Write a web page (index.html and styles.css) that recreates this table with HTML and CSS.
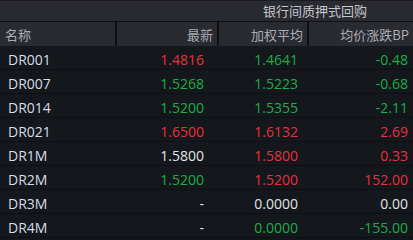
FILE: index.html
```html
<!DOCTYPE html>
<html lang="zh">
<head>
<meta charset="utf-8">
<link rel="stylesheet" href="styles.css">
</head>
<body>
<div class="board">
  <div class="title-bar">
    <div class="title">银行间质押式回购</div>
  </div>
  <div class="grid">
    <div class="hcell name">名称</div>
    <div class="hcell sep">最新</div>
    <div class="hcell sep">加权平均</div>
    <div class="hcell sep">均价涨跌BP</div>

    <div class="cell name">DR001</div>
    <div class="cell c2 up">1.4816</div>
    <div class="cell c3 down">1.4641</div>
    <div class="cell c4 down">-0.48</div>

    <div class="cell name">DR007</div>
    <div class="cell c2 down">1.5268</div>
    <div class="cell c3 down">1.5223</div>
    <div class="cell c4 down">-0.68</div>

    <div class="cell name">DR014</div>
    <div class="cell c2 down">1.5200</div>
    <div class="cell c3 down">1.5355</div>
    <div class="cell c4 down">-2.11</div>

    <div class="cell name">DR021</div>
    <div class="cell c2 up">1.6500</div>
    <div class="cell c3 up">1.6132</div>
    <div class="cell c4 up">2.69</div>

    <div class="cell name">DR1M</div>
    <div class="cell c2 flat">1.5800</div>
    <div class="cell c3 up">1.5800</div>
    <div class="cell c4 up">0.33</div>

    <div class="cell name">DR2M</div>
    <div class="cell c2 down">1.5200</div>
    <div class="cell c3 up">1.5200</div>
    <div class="cell c4 up">152.00</div>

    <div class="cell name">DR3M</div>
    <div class="cell c2 flat">-</div>
    <div class="cell c3 flat">0.0000</div>
    <div class="cell c4 flat">0.00</div>

    <div class="cell name">DR4M</div>
    <div class="cell c2 flat">-</div>
    <div class="cell c3 down">0.0000</div>
    <div class="cell c4 down">-155.00</div>
  </div>
</div>
</body>
</html>
```
FILE: styles.css
```css
html, body {
  margin: 0;
  padding: 0;
  background: #14171c;
}
body {
  font-family: "Open Sans", "Noto Sans CJK SC", sans-serif;
  width: 413px;
  height: 240px;
  overflow: hidden;
}
.board {
  display: flex;
  flex-direction: column;
}
.title-bar {
  height: 21px;
  background: #2a2a31;
  border-top: 1px solid #1a1a1f;
  box-sizing: border-box;
  display: grid;
  grid-template-columns: 217px 1fr;
}
.title {
  grid-column: 2;
  text-align: center;
  font-family: "Noto Sans CJK SC", sans-serif;
  font-size: 13px;
  line-height: 20px;
  color: #c4c6cc;
}
.grid {
  display: grid;
  grid-template-columns: 115px 102px 90px 1fr;
  grid-auto-rows: 24px;
  border-top: 1px solid #0f1013;
}
.hcell {
  background: #2a2a31;
  font-family: "Noto Sans CJK SC", sans-serif;
  font-size: 13px;
  line-height: 25px;
  color: #a9adb4;
  text-align: right;
  padding-right: 4px;
}
.hcell.name {
  text-align: left;
  padding-left: 5px;
}
.hcell.sep {
  border-left: 2px solid #0f1013;
}
.cell {
  box-sizing: border-box;
  font-size: 14px;
  line-height: 19px;
  padding-top: 4px;
  border-bottom: 1px solid #0e1014;
  text-align: right;
  color: #e2e4e8;
}
.cell.name {
  text-align: left;
  padding-left: 8px;
  color: #d4dde8;
}
.c2 { padding-right: 13px; }
.c3 { padding-right: 9px; }
.c4 { padding-right: 5px; }
.up { color: #e8313c; }
.down { color: #1eae49; }
.flat { color: #e2e4e8; }
```
